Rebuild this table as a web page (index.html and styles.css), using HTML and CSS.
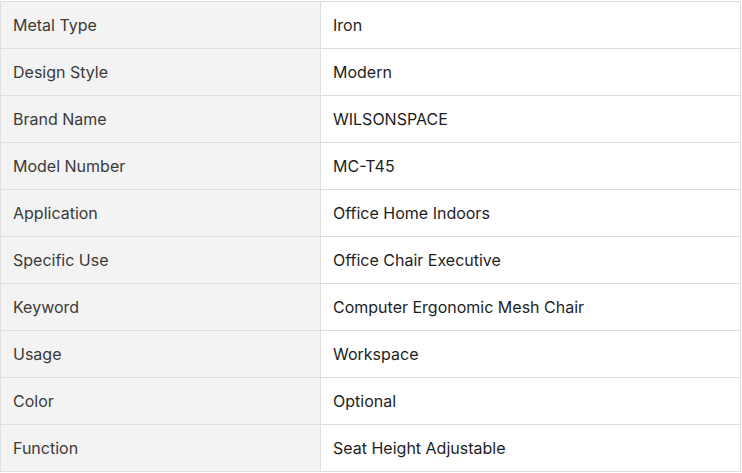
FILE: index.html
```html
<!DOCTYPE html>
<html>
<head>
<meta charset="utf-8">
<link rel="stylesheet" href="styles.css">
</head>
<body>
<table class="specs">
  <tr><th>Metal Type</th><td>Iron</td></tr>
  <tr><th>Design Style</th><td>Modern</td></tr>
  <tr><th>Brand Name</th><td>WILSONSPACE</td></tr>
  <tr><th>Model Number</th><td>MC-T45</td></tr>
  <tr><th>Application</th><td>Office Home Indoors</td></tr>
  <tr><th>Specific Use</th><td>Office Chair Executive</td></tr>
  <tr><th>Keyword</th><td>Computer Ergonomic Mesh Chair</td></tr>
  <tr><th>Usage</th><td>Workspace</td></tr>
  <tr><th>Color</th><td>Optional</td></tr>
  <tr><th>Function</th><td>Seat Height Adjustable</td></tr>
</table>
</body>
</html>
```
FILE: styles.css
```css
html, body {
  margin: 0;
  padding: 0;
  background: #fff;
}
body {
  padding-top: 1px;
  font-family: Inter, "Noto Sans", sans-serif;
  font-size: 16px;
}
.specs {
  border-collapse: collapse;
  width: 741px;
  table-layout: fixed;
}
.specs th, .specs td {
  border: 1px solid #dedede;
  height: 46px;
  padding: 0 12px;
  box-sizing: border-box;
  text-align: left;
  vertical-align: middle;
}
.specs tr {
  height: 47px;
}
.specs th {
  width: 320px;
  background: #f3f3f3;
  font-weight: 400;
  color: #3a3a3a;
}
.specs td {
  font-weight: 400;
  color: #1e1e1e;
}
```
